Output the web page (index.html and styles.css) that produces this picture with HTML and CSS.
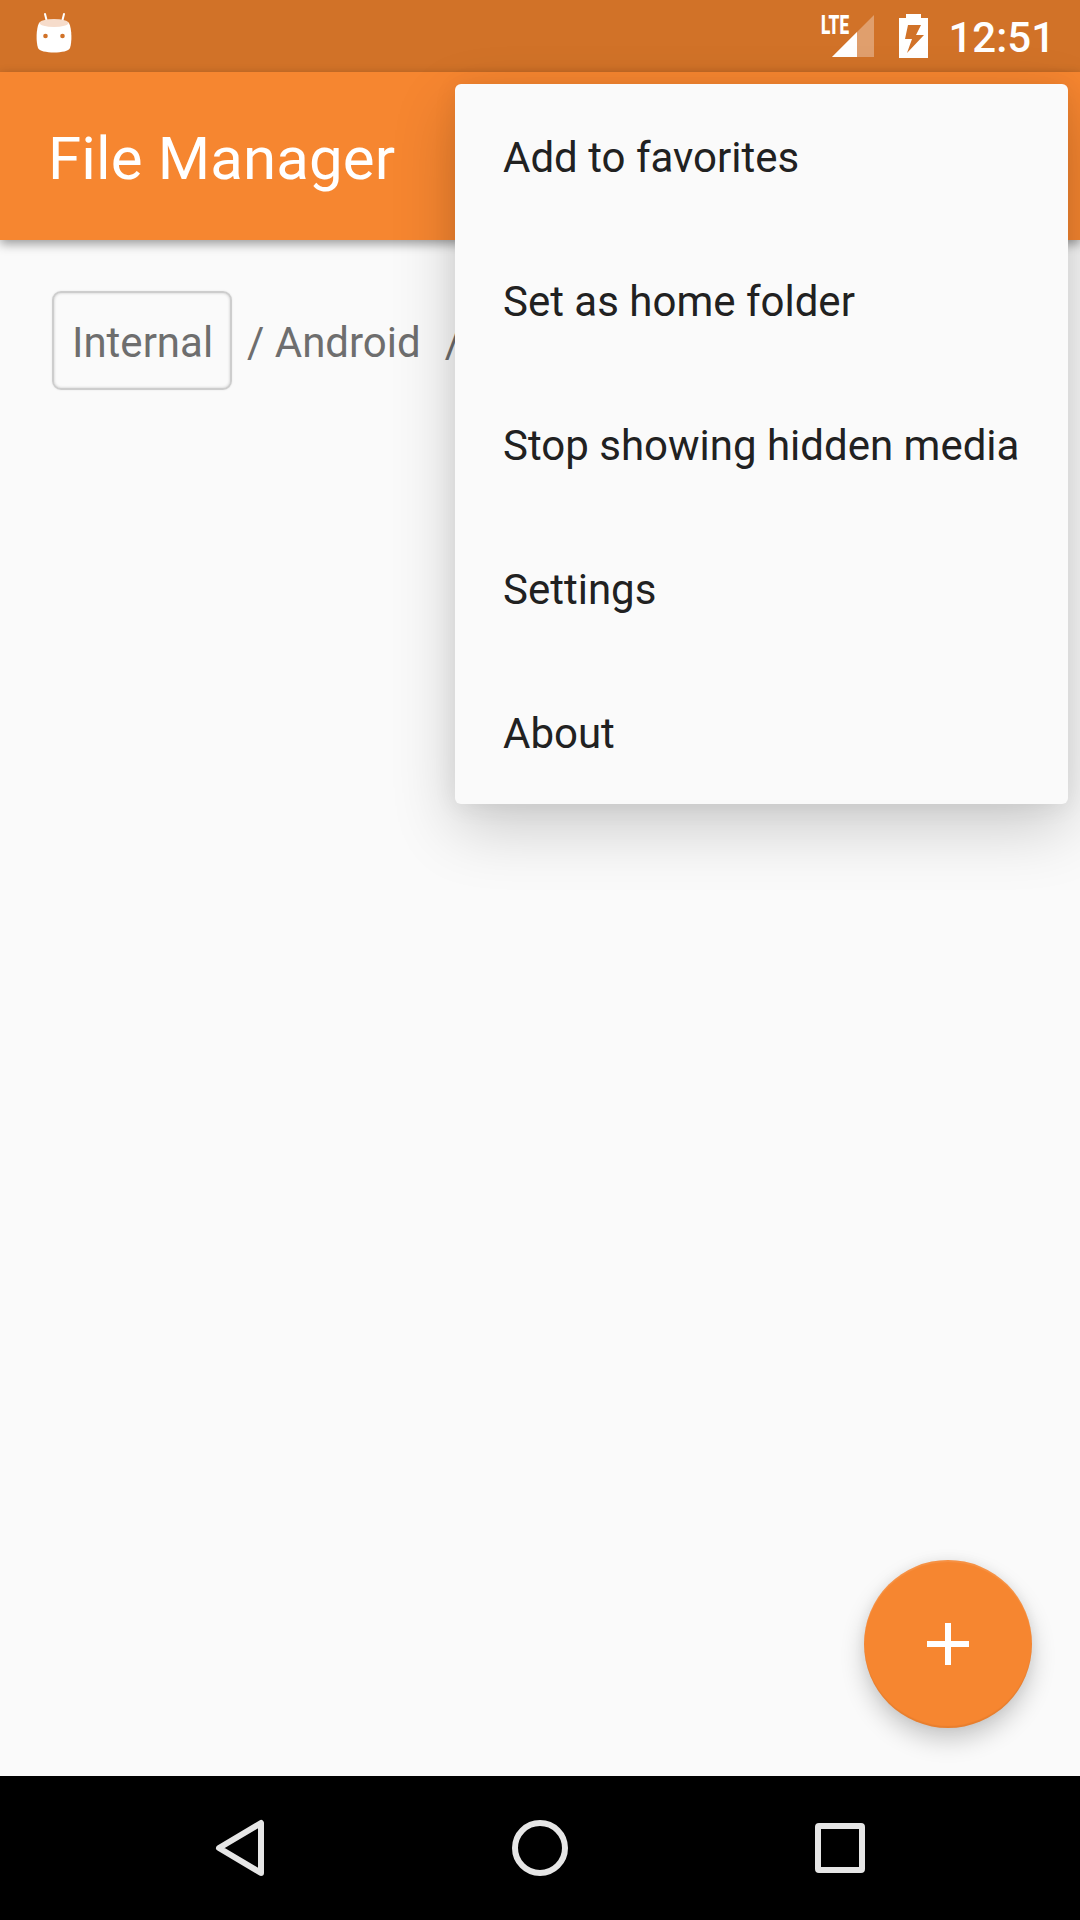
FILE: index.html
```html
<!DOCTYPE html>
<html lang="en">
<head>
<meta charset="utf-8">
<title>File Manager</title>
<link rel="stylesheet" href="styles.css">
</head>
<body>
<div class="screen">
  <header class="status-bar">
    <svg class="notification" width="36" height="42" viewBox="0 0 36 42">
      <path d="M9 2 11 10M28 2 26 10" stroke="#fff" stroke-width="2" stroke-linecap="round"/>
      <path d="M3 11C7 7 29 7 33 11C36 17 36 30 34 36C32 42 4 42 2 36C0 30 0 17 3 11Z" fill="#fff"/>
      <ellipse cx="18" cy="11" rx="14.5" ry="4" fill="#f6dccb"/>
      <circle cx="9.5" cy="24" r="2.3" fill="#d17228"/>
      <circle cx="26.5" cy="24" r="2.3" fill="#d17228"/>
    </svg>
    <div class="indicators">
      <svg class="signal" width="54" height="44" viewBox="0 0 54 44">
        <path d="M53 1V43H11Z" fill="#fff" opacity=".32"/>
        <path d="M36 18V43H11Z" fill="#fff"/>
        <text class="network" x="0" y="20" textLength="28" lengthAdjust="spacingAndGlyphs">LTE</text>
      </svg>
      <svg class="battery" width="29" height="44" viewBox="0 0 29 44">
        <path fill="#fff" fill-rule="evenodd" d="M7 0H22V4H29V44H0V4H7ZM9 11 6 25H13L8 39 25 21H17L22 11Z"/>
      </svg>
      <span class="clock">12:51</span>
    </div>
  </header>
  <div class="app-bar"><h1 class="title">File Manager</h1></div>
  <main class="content">
    <nav class="breadcrumbs">
      <span class="crumb crumb-root">Internal</span>
      <span class="crumb">/ Android</span>
      <span class="crumb">/ data</span>
    </nav>
    <button class="fab" aria-label="Add">
      <svg width="42" height="42" viewBox="0 0 42 42"><path d="M18 0H24V18H42V24H24V42H18V24H0V18H18Z" fill="#fff"/></svg>
    </button>
  </main>
  <footer class="nav-bar">
    <svg width="56" height="60" viewBox="0 0 56 60"><path d="M49 5V55L7 30Z" fill="none" stroke="#e6e6e6" stroke-width="6" stroke-linejoin="round"/></svg>
    <svg width="56" height="60" viewBox="0 0 56 60"><circle cx="28" cy="30" r="25" fill="none" stroke="#e6e6e6" stroke-width="6"/></svg>
    <svg width="56" height="60" viewBox="0 0 56 60"><rect x="6" y="8" width="44" height="44" rx="1" fill="none" stroke="#e6e6e6" stroke-width="6" stroke-linejoin="round"/></svg>
  </footer>
  <ul class="menu">
    <li class="menu-item">Add to favorites</li>
    <li class="menu-item">Set as home folder</li>
    <li class="menu-item">Stop showing hidden media</li>
    <li class="menu-item">Settings</li>
    <li class="menu-item">About</li>
  </ul>
</div>
</body>
</html>
```

FILE: styles.css
```css
* { box-sizing: border-box; }

body {
  margin: 0;
  font-family: Roboto, sans-serif;
}

svg { display: block; }

.screen {
  position: relative;
  display: flex;
  flex-direction: column;
  width: 1080px;
  height: 1920px;
  overflow: hidden;
  background: #fafafa;
}

.status-bar {
  display: flex;
  justify-content: space-between;
  align-items: flex-start;
  height: 72px;
  padding: 12px 25px 0 36px;
  background: #d17228;
}

.indicators {
  display: flex;
  align-items: flex-start;
  padding-top: 2px;
}

.signal { overflow: visible; }

.battery { margin-left: 24px; }

.network {
  font-size: 26px;
  font-weight: 900;
  fill: #fff;
}

.clock {
  margin-left: 20px;
  line-height: 47px;
  font-size: 42px;
  font-weight: 500;
  color: #fff;
}

.app-bar {
  display: flex;
  align-items: center;
  height: 168px;
  padding: 6px 48px 0;
  background: #f68630;
  box-shadow: 0 4px 10px rgba(0, 0, 0, .38);
}

.title {
  margin: 0;
  font-size: 60px;
  font-weight: 400;
  line-height: 72px;
  letter-spacing: .12px;
  color: #fff;
}

.content {
  display: flex;
  flex: 1;
  flex-direction: column;
  justify-content: space-between;
  padding: 51px 48px 48px 52px;
}

.breadcrumbs {
  display: flex;
  align-items: center;
  gap: 15px;
  height: 99px;
  white-space: nowrap;
}

.crumb {
  font-size: 42px;
  line-height: 50px;
  color: #6e6e6e;
  padding-top: 5px;
}

.crumb + .crumb + .crumb { margin-left: 9px; }

.crumb-root {
  height: 99px;
  width: 180px;
  padding: 25px 0 0 18px;
  border: 2px solid #cdcdcd;
  border-radius: 9px;
  box-shadow: inset 0 0 3px rgba(0, 0, 0, .2), 0 0 2px rgba(0, 0, 0, .1);
}

.fab {
  display: flex;
  align-items: center;
  justify-content: center;
  align-self: flex-end;
  width: 168px;
  height: 168px;
  padding: 0;
  border: 0;
  border-radius: 50%;
  background: #f68630;
  box-shadow: 0 12px 24px rgba(0, 0, 0, .2), 0 0 12px rgba(0, 0, 0, .06), inset 0 -2px 1px rgba(0, 0, 0, .06), inset 0 2px 1px rgba(255, 255, 255, .1);
}

.nav-bar {
  display: flex;
  align-items: center;
  justify-content: space-between;
  height: 144px;
  padding: 0 212px;
  background: #000;
}

.menu {
  position: absolute;
  top: 84px;
  right: 12px;
  width: 613px;
  margin: 0;
  padding: 0;
  list-style: none;
  border-radius: 6px;
  background: #fafafa;
  box-shadow: 0 24px 64px rgba(0, 0, 0, .19), 0 2px 24px rgba(0, 0, 0, .07);
}

.menu-item {
  display: flex;
  align-items: center;
  height: 144px;
  padding: 2px 48px 0;
  font-size: 42px;
  color: #212121;
  white-space: nowrap;
}
```
